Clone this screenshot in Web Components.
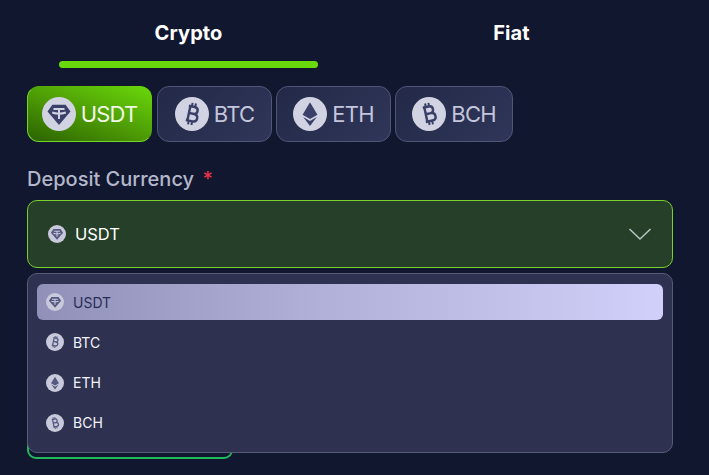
<!DOCTYPE html>
<html>
<head>
<meta charset="utf-8">
<style>
  html, body { margin: 0; height: 475px; overflow: hidden; background: #10172f; }
  body { font-family: "Inter", "Liberation Sans", sans-serif; }
</style>
</head>
<body>
<deposit-form></deposit-form>

<script>
const BITCOIN = `<path stroke-width="2.3" d="M11.5 9h5.6c2.3 0 3.5 1.3 3.5 3.2s-1.2 3.4-3.5 3.4h-4.2M12.9 15.6h5c2.4 0 3.7 1.4 3.7 3.5s-1.3 3.6-3.7 3.6h-6.4M13 9v13.7"/>
  <path stroke-width="1.9" d="M14.4 5.6V9M17.6 5.6V9M14.4 22.7v3.6M17.6 22.7v3.6"/>`;

const ICONS = {
  usdt: `<path fill="var(--ink)" d="M9.8 7.2h12.4l4.6 6.4L16 26.4 5.2 13.6z"/>
    <path fill="none" stroke="var(--disc)" stroke-width="1.9" d="M10.8 11.2h10.4M16 11.2v9.6M9.6 14.6c4 1.4 8.8 1.4 12.8 0"/>`,
  btc: `<g transform="rotate(12 16 16)" fill="none" stroke="var(--ink)">${BITCOIN}</g>`,
  eth: `<path fill="var(--ink)" d="M16 5l7 11.6-7 4-7-4z"/>
    <path fill="var(--ink)" d="M9.6 18.8l6.4 3.7 6.4-3.7L16 27.4z"/>`,
  bch: `<g transform="rotate(-12 16 16)" fill="none" stroke="var(--ink)">${BITCOIN}</g>`
};

class CoinIcon extends HTMLElement {
  connectedCallback() {
    const root = this.attachShadow({mode: 'open'});
    const size = this.getAttribute('size') || 20;
    const small = size < 20;
    root.innerHTML = `
      <style>
        :host {
          display: inline-flex;
          flex: none;
          width: ${size}px;
          height: ${size}px;
          border-radius: 50%;
          background: ${small ? '#c8c9da' : '#d2d3e2'};
          --disc: ${small ? '#c8c9da' : '#d2d3e2'};
          --ink: ${small ? '#555880' : '#3a4068'};
        }
        svg { width: 100%; height: 100%; display: block; }
      </style>
      <svg viewBox="0 0 32 32">${ICONS[this.getAttribute('coin')]}</svg>`;
  }
}
customElements.define('coin-icon', CoinIcon);

class TabBar extends HTMLElement {
  connectedCallback() {
    const root = this.attachShadow({mode: 'open'});
    root.innerHTML = `
      <style>
        :host { display: grid; grid-template-columns: 1fr 1fr; }
        .tab {
          height: 61px;
          padding-top: 14px;
          box-sizing: border-box;
          text-align: center;
          color: #fff;
          font: 700 20px/24px "Inter", sans-serif;
          letter-spacing: 0.1px;
        }
        .on::after {
          content: "";
          display: block;
          width: 80%;
          height: 7px;
          margin: 16px auto 0;
          border-radius: 4px;
          background: #69d90d;
        }
      </style>
      <div class="tab on">Crypto</div>
      <div class="tab">Fiat</div>`;
  }
}
customElements.define('tab-bar', TabBar);

class CoinButton extends HTMLElement {
  connectedCallback() {
    const root = this.attachShadow({mode: 'open'});
    root.innerHTML = `
      <style>
        :host {
          display: flex;
          align-items: center;
          justify-content: center;
          gap: 5px;
          height: 56px;
          box-sizing: border-box;
          border: 1px solid #4f5577;
          border-radius: 12px;
          background: linear-gradient(135deg, #232947, #2f3659);
          color: #c3c6dc;
          font: 400 22px "Inter", sans-serif;
          letter-spacing: -0.8px;
        }
        :host([active]) {
          border-color: transparent;
          border-left-color: #74d62a;
          border-bottom-color: #74d62a;
          background: linear-gradient(20deg, #2a6100 0%, #4b9705 45%, #6ad90a 100%) border-box;
          color: #f1f7e8;
        }
      </style>
      <coin-icon coin="${this.getAttribute('coin')}" size="34"></coin-icon><slot></slot>`;
  }
}
customElements.define('coin-button', CoinButton);

class CoinOption extends HTMLElement {
  connectedCallback() {
    const root = this.attachShadow({mode: 'open'});
    root.innerHTML = `
      <style>
        :host {
          display: flex;
          align-items: center;
          gap: 9px;
          height: 36px;
          padding-left: 9px;
          border-radius: 6px;
          color: #f3f3fa;
          font: 400 14px "Inter", sans-serif;
        }
        :host([selected]) {
          background: linear-gradient(90deg, #9190b8 0%, #b0b0d8 45%, #d0d0fa 100%);
          color: #2a2d55;
        }
      </style>
      <coin-icon coin="${this.getAttribute('coin')}" size="18"></coin-icon><slot></slot>`;
  }
}
customElements.define('coin-option', CoinOption);

class CurrencySelect extends HTMLElement {
  connectedCallback() {
    const root = this.attachShadow({mode: 'open'});
    root.innerHTML = `
      <style>
        :host { display: block; position: relative; }
        .control {
          display: flex;
          align-items: center;
          gap: 9px;
          height: 68px;
          padding: 0 20px;
          box-sizing: border-box;
          border: 1px solid #7ad02e;
          border-radius: 10px;
          background: #253f28;
          color: #fff;
          font: 400 16.5px "Inter", sans-serif;
        }
        .control svg { margin-left: auto; }
        .menu {
          position: absolute;
          left: 0;
          right: 0;
          top: 73px;
          height: 180px;
          box-sizing: border-box;
          padding: 10px 9px;
          display: flex;
          flex-direction: column;
          gap: 4.3px;
          border: 1px solid #575b77;
          border-radius: 10px;
          background: #2e3150;
        }
      </style>
      <div class="control">
        <coin-icon coin="usdt" size="18"></coin-icon>USDT
        <svg width="24" height="14" viewBox="0 0 24 14"><path d="M1.5 2l10.5 10L22.5 2" fill="none" stroke="#b5c2c0" stroke-width="1.6"/></svg>
      </div>
      <div class="menu"><slot></slot></div>`;
  }
}
customElements.define('currency-select', CurrencySelect);

class DepositForm extends HTMLElement {
  connectedCallback() {
    const root = this.attachShadow({mode: 'open'});
    root.innerHTML = `
      <style>
        :host {
          display: flex;
          flex-direction: column;
          height: 475px;
          box-sizing: border-box;
          padding: 7px 36px 0 27px;
        }
        .coins { display: flex; gap: 4px; margin-top: 18px; }
        .coins coin-button { width: 115px; }
        .coins coin-button[active] { width: 125px; margin-right: 1px; }
        .coins coin-button:last-child { width: 118px; }
        .label {
          margin: 24px 0 8px;
          color: #b4b7cb;
          font: 500 20px/26px "Inter", sans-serif;
        }
        .label span { color: #e8314a; margin-left: 3px; }
        .submit {
          width: 206px;
          height: 40px;
          margin-top: 151px;
          box-sizing: border-box;
          border: 2px solid #22b85c;
          border-radius: 9px;
        }
      </style>
      <tab-bar></tab-bar>
      <div class="coins">
        <coin-button coin="usdt" active>USDT</coin-button>
        <coin-button coin="btc">BTC</coin-button>
        <coin-button coin="eth">ETH</coin-button>
        <coin-button coin="bch">BCH</coin-button>
      </div>
      <div class="label">Deposit Currency <span>*</span></div>
      <currency-select>
        <coin-option coin="usdt" selected>USDT</coin-option>
        <coin-option coin="btc">BTC</coin-option>
        <coin-option coin="eth">ETH</coin-option>
        <coin-option coin="bch">BCH</coin-option>
      </currency-select>
      <div class="submit"></div>`;
  }
}
customElements.define('deposit-form', DepositForm);
</script>
</body>
</html>
